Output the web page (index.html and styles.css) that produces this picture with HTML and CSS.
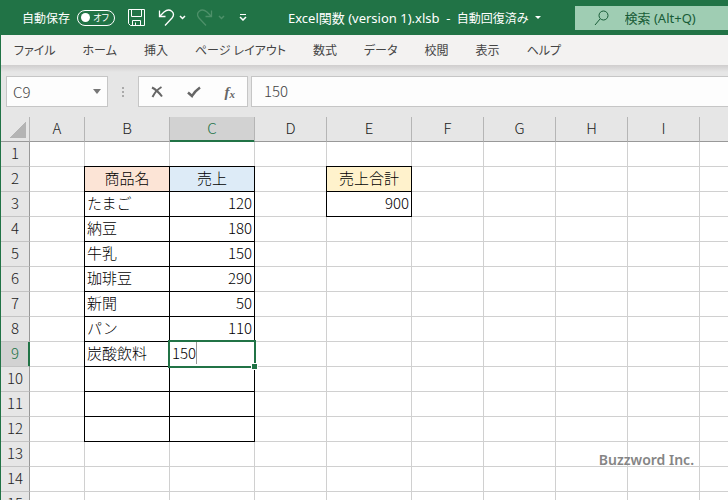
FILE: index.html
```html
<!DOCTYPE html>
<html lang="ja">
  <head>
    <meta charset="UTF-8" />
    <meta name="viewport" content="width=device-width, initial-scale=1.0" />
    <title>Excel関数 (version 1).xlsb</title>
    <link rel="stylesheet" href="styles.css" />
  </head>
  <body>
    <!-- タイトルバー -->
    <header class="titlebar">
      <label class="autosave-label" for="autosave">自動保存</label>
      <button class="autosave" id="autosave" type="button"><span class="knob"></span>オフ</button>
      <button class="tool save" type="button" aria-label="上書き保存">
        <svg width="17" height="17" viewBox="0 0 17 17"><path d="M.5.5h16v16h-14l-2-2zM3.500.5v7h10v-7M4.500 16.500v-5h8v5M7.500 16v-2.500" /></svg>
      </button>
      <button class="tool undo" type="button" aria-label="元に戻す">
        <svg width="28" height="18" viewBox="0 0 28 18"><path class="arrow" d="M1.500 1.500v6h6M1.500 7.500l4.500-4.500c6-5 12 1 8 6l-7 7.500" /><path class="thick" d="M22 7l2.500 2.500L27 7" /></svg>
      </button>
      <button class="tool redo" type="button" aria-label="やり直し" disabled>
        <svg width="28" height="18" viewBox="0 0 28 18"><path class="arrow" d="M14.500 1.500v6h-6M14.500 7.500L10 3c-6-5-12 1-8 6l7 7.500" /><path class="thick" d="M22 7l2.500 2.500L27 7" /></svg>
      </button>
      <button class="tool custom" type="button" aria-label="クイック アクセス ツール バーのユーザー設定">
        <svg width="8" height="7" viewBox="0 0 8 7"><path d="M1 .5h6" /><path class="thick" d="M1 3l3 3 3-3" /></svg>
      </button>
      <h1 class="filename">Excel関数 (version 1).xlsb &nbsp;-&nbsp; <span class="status">自動回復済み</span><span class="caret"></span></h1>
      <div class="search">
        <svg width="16" height="16" viewBox="0 0 16 16"><circle cx="9.500" cy="5.500" r="4.500" /><path d="M6 9L1 15" /></svg>
        <input type="text" aria-label="検索" placeholder="検索 (Alt+Q)" />
      </div>
    </header>

    <div class="window">
      <!-- リボンのタブ -->
      <nav class="tabs">
        <a href="#">ファイル</a>
        <a href="#">ホーム</a>
        <a href="#">挿入</a>
        <a href="#">ページ レイアウト</a>
        <a href="#">数式</a>
        <a href="#">データ</a>
        <a href="#">校閲</a>
        <a href="#">表示</a>
        <a href="#">ヘルプ</a>
      </nav>

      <!-- 数式バー -->
      <div class="formulabar">
        <div class="namebox">
          <input type="text" aria-label="名前ボックス" value="C9" />
          <span class="caret"></span>
        </div>
        <span class="grip"><i></i><i></i><i></i></span>
        <div class="actions">
          <button type="button" aria-label="キャンセル">
            <svg width="12" height="12" viewBox="0 0 12 12"><path d="M1 1.500c4 2 7 5 10 9M10.500 1C7 3 3.500 7 1.500 11" /></svg>
          </button>
          <button type="button" aria-label="入力">
            <svg width="14" height="12" viewBox="0 0 14 12"><path class="check" d="M1 6.500l4 3.500C7 6.500 9.500 4 13 1.500" /></svg>
          </button>
          <button class="fx" type="button" aria-label="関数の挿入">f<sub>x</sub></button>
        </div>
        <input class="formula" type="text" aria-label="数式" value="150" />
      </div>

      <!-- シート -->
      <table class="sheet">
        <colgroup>
          <col class="col-head" />
          <col class="col-a" />
          <col class="col-wide" />
          <col class="col-wide" />
          <col class="col-std" />
          <col class="col-wide" />
          <col class="col-std" />
          <col class="col-std" />
          <col class="col-std" />
          <col class="col-std" />
          <col />
        </colgroup>
        <thead>
          <tr><th class="corner"></th><th>A</th><th>B</th><th class="current">C</th><th>D</th><th>E</th><th>F</th><th>G</th><th>H</th><th>I</th><th></th></tr>
        </thead>
        <tbody>
          <tr><th>1</th><td></td><td></td><td></td><td></td><td></td><td></td><td></td><td></td><td></td><td></td></tr>
          <tr><th>2</th><td></td><td class="box title orange">商品名</td><td class="box title blue">売上</td><td></td><td class="box title yellow">売上合計</td><td></td><td></td><td></td><td></td><td></td></tr>
          <tr><th>3</th><td></td><td class="box">たまご</td><td class="box num">120</td><td></td><td class="box num">900</td><td></td><td></td><td></td><td></td><td></td></tr>
          <tr><th>4</th><td></td><td class="box">納豆</td><td class="box num">180</td><td></td><td></td><td></td><td></td><td></td><td></td><td></td></tr>
          <tr><th>5</th><td></td><td class="box">牛乳</td><td class="box num">150</td><td></td><td></td><td></td><td></td><td></td><td></td><td></td></tr>
          <tr><th>6</th><td></td><td class="box">珈琲豆</td><td class="box num">290</td><td></td><td></td><td></td><td></td><td></td><td></td><td></td></tr>
          <tr><th>7</th><td></td><td class="box">新聞</td><td class="box num">50</td><td></td><td></td><td></td><td></td><td></td><td></td><td></td></tr>
          <tr><th>8</th><td></td><td class="box">パン</td><td class="box num">110</td><td></td><td></td><td></td><td></td><td></td><td></td><td></td></tr>
          <tr><th class="current">9</th><td></td><td class="box">炭酸飲料</td><td class="box active"><div class="editor"><input type="text" aria-label="C9" value="150" /><span class="handle"></span></div></td><td></td><td></td><td></td><td></td><td></td><td></td><td></td></tr>
          <tr><th>10</th><td></td><td class="box"></td><td class="box"></td><td></td><td></td><td></td><td></td><td></td><td></td><td></td></tr>
          <tr><th>11</th><td></td><td class="box"></td><td class="box"></td><td></td><td></td><td></td><td></td><td></td><td></td><td></td></tr>
          <tr><th>12</th><td></td><td class="box"></td><td class="box"></td><td></td><td></td><td></td><td></td><td></td><td></td><td></td></tr>
          <tr><th>13</th><td></td><td></td><td></td><td></td><td></td><td></td><td></td><td></td><td></td><td></td></tr>
          <tr><th>14</th><td></td><td></td><td></td><td></td><td></td><td></td><td></td><td></td><td></td><td></td></tr>
          <tr><th>15</th><td></td><td></td><td></td><td></td><td></td><td></td><td></td><td></td><td></td><td></td></tr>
        </tbody>
      </table>
    </div>

    <div class="watermark">Buzzword Inc.</div>
  </body>
</html>
```

FILE: styles.css
```css
:root {
  --green: #217346;
  --chrome: #e6e6e6;
  --line: #d0d0d0;
  --head-line: #999;
  --ui-font: 'Noto Sans', 'Noto Sans CJK JP', sans-serif;
  --cell-font: 'Noto Sans CJK JP', sans-serif;
}

* {
  box-sizing: border-box;
}

body {
  display: flex;
  flex-direction: column;
  height: 100vh;
  margin: 0;
  overflow: hidden;
  position: relative;
  background: #fff;
  font-family: var(--ui-font);
  font-size: 12px;
  font-feature-settings: 'palt';
}

button,
input {
  margin: 0;
  padding: 0;
  border: 0;
  background: none;
  color: inherit;
  font: inherit;
  font-feature-settings: inherit;
  outline: none;
}

svg {
  display: block;
  fill: none;
  stroke: currentColor;
}

/* タイトルバー */
.titlebar {
  display: flex;
  flex: none;
  align-items: center;
  height: 35px;
  padding-left: 22px;
  background: var(--green);
  color: #fff;
  white-space: nowrap;
}
.autosave {
  display: flex;
  align-items: center;
  justify-content: space-between;
  width: 38px;
  height: 16px;
  margin-left: 7px;
  padding: 0 5px 0 3px;
  border: 1px solid #fff;
  border-radius: 8px;
  font-size: 9px;
  line-height: 14px;
}
.knob {
  width: 9px;
  height: 9px;
  border-radius: 50%;
  background: #fff;
}
.tool {
  flex: none;
}
.arrow {
  stroke-width: 1.3;
}
.thick {
  stroke-width: 1.5;
}
.save {
  margin-left: 13px;
}
.undo {
  margin-left: 13px;
}
.redo {
  margin-left: 11px;
  color: #4d9069;
}
.custom {
  margin-left: 14px;
}
.filename {
  display: flex;
  align-items: center;
  margin: 0 0 0 41px;
  font-size: 13px;
  font-weight: 400;
}
.status {
  margin-left: 3px;
  font-size: 12px;
}
.caret {
  border: 3px solid transparent;
  border-top-color: currentColor;
  border-bottom: 0;
}
.filename .caret {
  margin-left: 6px;
}
.search {
  display: flex;
  flex: 1;
  align-items: center;
  gap: 15px;
  min-width: 0;
  height: 24px;
  margin-left: 34px;
  padding-left: 19px;
  background: #9fcdb3;
  color: #185c37;
  font-size: 13px;
}
.search svg {
  flex: none;
}
.search input {
  flex: 1;
  min-width: 0;
}
.search input::placeholder {
  color: #185c37;
}

.window {
  flex: 1;
  min-height: 0;
  border-left: 1px solid var(--green);
  overflow: hidden;
}

/* リボンのタブ */
.tabs {
  display: flex;
  align-items: center;
  gap: 27px;
  height: 30px;
  padding-left: 13px;
  background: #f3f2f1;
  white-space: nowrap;
}
.tabs a {
  color: #444;
  text-decoration: none;
}

/* 数式バー */
.formulabar {
  display: flex;
  height: 52px;
  padding: 11px 0 10px 5px;
  background: linear-gradient(#cfcdcd, var(--chrome) 7px);
  color: #444;
  font-family: var(--cell-font);
  font-size: 15px;
  font-weight: 300;
}
.namebox,
.actions,
.formula {
  border: 1px solid #c6c6c6;
  background: #fdfdfd;
}
.namebox {
  display: flex;
  align-items: center;
  justify-content: space-between;
  width: 102px;
  padding: 0 6px;
}
.namebox input {
  width: 60px;
}
.namebox .caret {
  border-width: 5px 4px 0;
  color: #777;
}
.grip {
  display: flex;
  flex-direction: column;
  justify-content: center;
  gap: 2px;
  margin: 0 14px;
}
.grip i {
  width: 2px;
  height: 2px;
  background: #aaa;
}
.actions {
  display: flex;
  align-items: center;
  justify-content: space-between;
  width: 110px;
  padding: 0 12px;
  color: #666;
}
.actions svg {
  stroke-width: 2;
}
.actions .check {
  stroke-width: 2.5;
}
.fx {
  font: italic bold 15px/16px 'Liberation Serif', serif;
}
.fx sub {
  font-size: 11px;
  line-height: 1;
  vertical-align: -1px;
}
.formula {
  flex: 1;
  min-width: 0;
  margin-left: 3px;
  padding: 0 0 3px 12px;
  border-right: 0;
}

/* シート */
.sheet {
  width: 100%;
  table-layout: fixed;
  border-collapse: separate;
  border-spacing: 0;
  font-family: var(--cell-font);
  font-size: 15px;
  font-feature-settings: normal;
  line-height: 22px;
}
.col-head {
  width: 29px;
}
.col-a {
  width: 55px;
}
.col-wide {
  width: 85px;
}
.col-std {
  width: 72px;
}
.sheet th,
.sheet td {
  height: 25px;
  padding: 0 2px 2px;
  border: solid var(--line);
  border-width: 0 1px 1px 0;
  font-weight: 300;
  text-align: left;
  white-space: nowrap;
}
.sheet th {
  padding: 0 0 2px;
  background: var(--chrome);
  color: #222;
  text-align: center;
}
.sheet thead th {
  border-right-color: #b5b5b5;
  border-bottom-color: var(--head-line);
}
.sheet tbody th {
  border-right-color: var(--head-line);
  border-bottom-color: #c4c4c4;
}
.sheet tr > :last-child {
  border-right: 0;
}
.sheet .corner {
  background: linear-gradient(135deg, transparent 50%, #b4b4b4 50%) 8px 4px / 17px 17px no-repeat var(--chrome);
}
.sheet .current {
  background: #d2d2d2;
  color: var(--green);
}
.sheet thead .current {
  box-shadow: inset 0 -1px var(--green);
  border-bottom-color: var(--green);
}
.sheet tbody .current {
  box-shadow: inset -1px 0 var(--green);
  border-right-color: var(--green);
}
.sheet .box {
  border-color: #000;
  box-shadow: -1px 0 #000, 0 -1px #000, -1px -1px #000;
}
.sheet .title {
  text-align: center;
}
.sheet .num {
  text-align: right;
}
.orange {
  background: #fce4d6;
}
.blue {
  background: #ddebf7;
}
.yellow {
  background: #fff2cc;
}

/* 編集中のセル */
.active {
  position: relative;
}
.editor {
  position: absolute;
  z-index: 1;
  inset: -2px;
  display: flex;
  border: 2px solid var(--green);
  background: #fff;
}
.editor input {
  width: 27px;
  height: 22px;
  padding-left: 2px;
  border-right: 1px solid #999;
}
.handle {
  position: absolute;
  right: -4px;
  bottom: -4px;
  width: 7px;
  height: 7px;
  border: 1px solid #fff;
  background: var(--green);
}

.watermark {
  position: absolute;
  right: 34px;
  bottom: 30px;
  color: #858585;
  font-size: 14px;
  font-weight: 600;
  line-height: 20px;
}
```
